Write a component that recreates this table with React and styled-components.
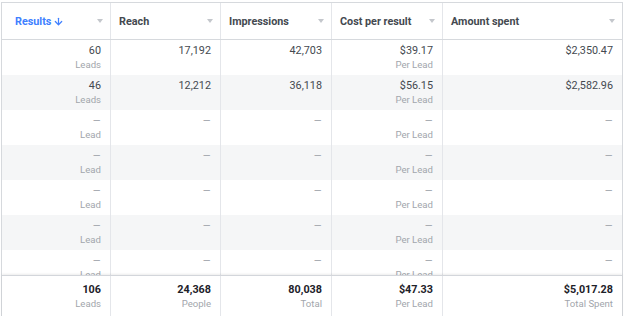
import styled, { createGlobalStyle } from 'styled-components'
import { ArrowDown } from 'lucide-react'

const GlobalStyle = createGlobalStyle`
    body {
        margin: 0;
        background: #ffffff;
        font-family: Roboto, "Liberation Sans", sans-serif;
    }
`

const columns = [
    { title: 'Results', sorted: true },
    { title: 'Reach' },
    { title: 'Impressions' },
    { title: 'Cost per result' },
    { title: 'Amount spent' },
]

const dashRow = [['–', 'Lead'], ['–'], ['–'], ['–', 'Per Lead'], ['–']]

const rows = [
    [['60', 'Leads'], ['17,192'], ['42,703'], ['$39.17', 'Per Lead'], ['$2,350.47']],
    [['46', 'Leads'], ['12,212'], ['36,118'], ['$56.15', 'Per Lead'], ['$2,582.96']],
    dashRow, dashRow, dashRow, dashRow, dashRow,
]

const totals = [
    ['106', 'Leads'], ['24,368', 'People'], ['80,038', 'Total'], ['$47.33', 'Per Lead'], ['$5,017.28', 'Total Spent'],
]

function App() {
    return (
        <>
            <GlobalStyle />
            <Table>
                <Header>
                    {columns.map(col => (
                        <HeadCell key={col.title} $first={col.sorted}>
                            <HeadTitle $active={col.sorted}>
                                {col.title}
                                {col.sorted && <ArrowDown size={11} strokeWidth={2.6} />}
                            </HeadTitle>
                            <Caret />
                        </HeadCell>
                    ))}
                </Header>

                <Body>
                    {rows.map((row, i) => (
                        <Row key={i} $striped={i % 2 === 1}>
                            {row.map(([value, label], j) => (
                                <Cell key={j}>
                                    <Value $empty={value === '–'}>{value}</Value>
                                    {label && <Label>{label}</Label>}
                                </Cell>
                            ))}
                        </Row>
                    ))}
                </Body>

                <Footer>
                    {totals.map(([value, label]) => (
                        <FootCell key={label}>
                            <Total>{value}</Total>
                            <Label>{label}</Label>
                        </FootCell>
                    ))}
                </Footer>
            </Table>
        </>
    )
}

export default App

const grid = `
    display: grid;
    grid-template-columns: 109px 110px 111px 111px 1fr;
`

const Table = styled.div`
    box-sizing: border-box;
    width: 622px;
    margin: 2px 0 0 1px;
    border: 1px solid #d6d9dd;
    border-bottom: none;
    background: #fff;
`

const Header = styled.div`
    ${grid}
    height: 36px;
    border-bottom: 1px solid #d6d9dd;
`

const HeadCell = styled.div`
    display: flex;
    align-items: center;
    justify-content: space-between;
    padding: 0 7px 0 ${p => p.$first ? '13px' : '8px'};
    border-right: 1px solid #e4e6ea;

    &:last-child {
        border-right: none;
    }
`

const HeadTitle = styled.div`
    display: flex;
    align-items: center;
    gap: 2px;
    font-size: 10.8px;
    font-weight: 700;
    color: ${p => p.$active ? '#4080ff' : '#444950'};
`

const Caret = styled.span`
    width: 0;
    height: 0;
    border-left: 3.5px solid transparent;
    border-right: 3.5px solid transparent;
    border-top: 4px solid #c4c7cc;
`

const Body = styled.div`
    height: 235px;
    overflow: hidden;
`

const Row = styled.div`
    ${grid}
    height: 35px;
    background: ${p => p.$striped ? '#f5f6f7' : '#fff'};
`

const Cell = styled.div`
    display: flex;
    flex-direction: column;
    align-items: flex-end;
    padding: 4px 9px 0 0;
    border-right: 1px solid #e4e6ea;

    &:last-child {
        border-right: none;
    }
`

const Value = styled.div`
    font-size: ${p => p.$empty ? '13px' : '10.8px'};
    line-height: 14px;
    color: ${p => p.$empty ? '#a9adb3' : '#444950'};
`

const Label = styled.div`
    font-size: 9.6px;
    line-height: 14px;
    color: #a2a6ac;
`

const Footer = styled.div`
    ${grid}
    height: 44px;
    border-top: 1px solid #d3d6db;
    box-shadow: 0 -1px 2px rgba(0, 0, 0, 0.08);
    position: relative;
    background: #fff;
`

const FootCell = styled(Cell)`
    padding-top: 7px;
`

const Total = styled.div`
    font-size: 10.8px;
    line-height: 14px;
    font-weight: 700;
    color: #1d2129;
`
